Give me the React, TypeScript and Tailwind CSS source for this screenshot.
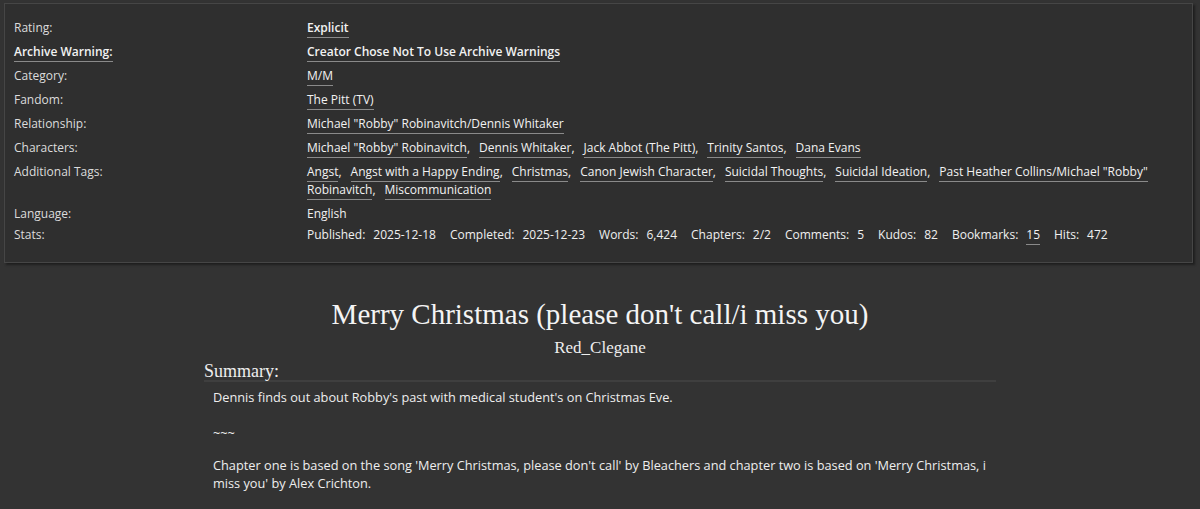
import React from "react";

function Tag({ children, bold = false }: { children: React.ReactNode; bold?: boolean }) {
  return (
    <a
      className={
        "border-b border-[#8a8a8a] pb-[1px] text-[#f2f2f2] " + (bold ? "font-semibold" : "")
      }
    >
      {children}
    </a>
  );
}

function TagList({ items }: { items: React.ReactNode[] }) {
  return (
    <span>
      {items.map((it, i) => (
        <span key={i}>
          <Tag>{it}</Tag>
          {i < items.length - 1 ? <span className="mr-[9px]">,</span> : null}
        </span>
      ))}
    </span>
  );
}

function Row({ label, children, labelLink = false }: { label: string; children: React.ReactNode; labelLink?: boolean }) {
  return (
    <div className="flex">
      <div className="w-[293px] shrink-0 text-[#dcdcdc]">
        {labelLink ? (
          <a className="border-b border-[#8a8a8a] pb-[1px] font-semibold text-[#f2f2f2]">{label}</a>
        ) : (
          label
        )}
      </div>
      <div className="flex-1 text-[#f0f0f0]">{children}</div>
    </div>
  );
}

function Stat({ k, v, link = false, first = false }: { k: string; v: string; link?: boolean; first?: boolean }) {
  return (
    <span className={first ? "" : "ml-[14px]"}>
      <span>{k}:</span>
      <span className="ml-[8px]">{link ? <Tag>{v}</Tag> : v}</span>
    </span>
  );
}

export default function App() {
  return (
    <div className="min-h-[509px] w-[1200px] overflow-hidden bg-[#333333] pt-[3px] font-['Open_Sans','Noto_Sans',sans-serif] text-[12px] leading-[18px] text-[#eeeeee]">
      <div className="ml-[4px] w-[1189px] border border-[#464646] bg-[#2f2f2f] pb-[18px] pl-[9px] pt-[15px] shadow-[2px_2px_2px_#1f1f1f]">
        <div className="flex flex-col gap-[6px]">
          <Row label="Rating:">
            <Tag bold>Explicit</Tag>
          </Row>
          <Row label="Archive Warning:" labelLink>
            <Tag bold>Creator Chose Not To Use Archive Warnings</Tag>
          </Row>
          <Row label="Category:">
            <Tag>M/M</Tag>
          </Row>
          <Row label="Fandom:">
            <Tag>The Pitt (TV)</Tag>
          </Row>
          <Row label="Relationship:">
            <Tag>Michael "Robby" Robinavitch/Dennis Whitaker</Tag>
          </Row>
          <Row label="Characters:">
            <TagList
              items={[
                'Michael "Robby" Robinavitch',
                "Dennis Whitaker",
                "Jack Abbot (The Pitt)",
                "Trinity Santos",
                "Dana Evans",
              ]}
            />
          </Row>
          <Row label="Additional Tags:">
            <div>
              <div className="whitespace-nowrap">
                <TagList
                  items={[
                    "Angst",
                    "Angst with a Happy Ending",
                    "Christmas",
                    "Canon Jewish Character",
                    "Suicidal Thoughts",
                    "Suicidal Ideation",
                    'Past Heather Collins/Michael "Robby"',
                  ]}
                />
              </div>
              <div className="whitespace-nowrap">
                <Tag>Robinavitch</Tag>
                <span className="mr-[9px]">,</span>
                <Tag>Miscommunication</Tag>
              </div>
            </div>
          </Row>
          <Row label="Language:">English</Row>
          <div className="-mt-[3px]">
            <Row label="Stats:">
              <div className="whitespace-nowrap">
                <Stat k="Published" v="2025-12-18" first />
                <Stat k="Completed" v="2025-12-23" />
                <Stat k="Words" v="6,424" />
                <Stat k="Chapters" v="2/2" />
                <Stat k="Comments" v="5" />
                <Stat k="Kudos" v="82" />
                <Stat k="Bookmarks" v="15" link />
                <Stat k="Hits" v="472" />
              </div>
            </Row>
          </div>
        </div>
      </div>

      <div className="mt-[34px] text-center font-['Liberation_Serif',serif] text-[29px] leading-[34px] text-[#f4f4f4]">
        Merry Christmas (please don't call/i miss you)
      </div>
      <div className="mt-[6px] text-center font-['Liberation_Serif',serif] text-[17px] leading-[22px] text-[#eeeeee]">
        Red_Clegane
      </div>

      <div className="mx-auto mt-[3px] w-[792px]">
        <div className="border-b-2 border-[#3f3f3f] font-['Liberation_Serif',serif] text-[18px] leading-[18px] text-[#eeeeee]">
          Summary:
        </div>
        <div className="pl-[9px] pt-[6px] text-[12.75px] text-[#eeeeee]">
          <p>Dennis finds out about Robby's past with medical student's on Christmas Eve.</p>
          <p className="mt-[18px]">~~~</p>
          <p className="mt-[14px]">
            Chapter one is based on the song 'Merry Christmas, please don't call' by Bleachers and chapter two is based on 'Merry Christmas, i
            <br />
            miss you' by Alex Crichton.
          </p>
        </div>
      </div>
    </div>
  );
}
